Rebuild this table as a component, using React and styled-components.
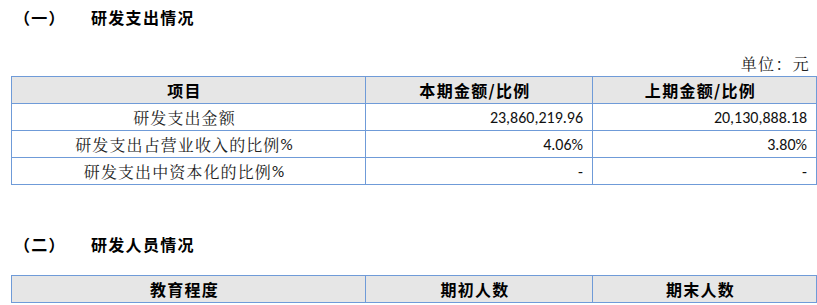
import React from "react";
import styled, { createGlobalStyle } from "styled-components";

const Global = createGlobalStyle`
  html, body { margin: 0; padding: 0; background: #fff; }
  body { font-family: "Noto Sans CJK SC", "Noto Sans", sans-serif; color: #111; }
`;

const CJK_SERIF = `"Noto Serif CJK SC", "Noto Sans CJK SC", serif`;
const CJK_SANS = `"Noto Sans CJK SC", "Noto Sans", sans-serif`;
const NUM = `"Carlito", Lato, "Noto Sans", sans-serif`;

const Page = styled.div`
  width: 817px;
  padding: 8px 0 0 11px;
  box-sizing: border-box;
`;

const Heading = styled.h2`
  display: flex;
  margin: ${(p) => p.$top}px 0 0 0;
  padding-left: 3px;
  font-family: ${CJK_SANS};
  font-weight: 700;
  font-size: 16px;
  line-height: 18px;
  letter-spacing: 1.3px;
  color: #000;
`;

const HeadingNo = styled.span`
  width: 77px;
  flex: none;
`;

const Unit = styled.div`
  margin-top: 29px;
  width: 806px;
  box-sizing: border-box;
  padding-right: 7px;
  text-align: right;
  font-family: ${CJK_SERIF};
  font-weight: 400;
  font-size: 16px;
  line-height: 18px;
  letter-spacing: 1.3px;
  color: #222;
`;

const Table = styled.div`
  display: grid;
  grid-template-columns: 354px 227px 224px;
  width: max-content;
  margin-top: ${(p) => p.$top}px;
  border-top: 1px solid #6f9bd8;
  border-left: 1px solid #6f9bd8;
`;

const Cell = styled.div`
  height: 27px;
  box-sizing: border-box;
  border-right: 1px solid #6f9bd8;
  border-bottom: 1px solid #6f9bd8;
  display: flex;
  align-items: center;
  justify-content: ${(p) => (p.$align === "right" ? "flex-end" : "center")};
  padding: 0 9px 0 ${(p) => (p.$align === "right" ? 0 : 1)}px;
  white-space: nowrap;
`;

const HeadCell = styled(Cell)`
  background: #e6e6e6;
  font-family: ${CJK_SANS};
  font-weight: 700;
  font-size: 16px;
  letter-spacing: 1.3px;
  color: #000;
`;

const LabelCell = styled(Cell)`
  font-family: ${CJK_SERIF};
  font-weight: 400;
  font-size: 16px;
  letter-spacing: 1.1px;
  color: #222;
`;

const Pct = styled.span`
  font-family: ${NUM};
  font-size: 17px;
`;

const NumCell = styled(Cell)`
  font-family: ${NUM};
  font-size: 16px;
  color: #111;
  padding-right: 9px;
`;

const rdRows = [
  ["研发支出金额", "", "23,860,219.96", "20,130,888.18"],
  ["研发支出占营业收入的比例", "%", "4.06%", "3.80%"],
  ["研发支出中资本化的比例", "%", "-", "-"],
];

export default function App() {
  return (
    <Page>
      <Global />
      <Heading $top={0}>
        <HeadingNo>（一）</HeadingNo>
        <span>研发支出情况</span>
      </Heading>
      <Unit>单位：元</Unit>
      <Table $top={3}>
        <HeadCell>项目</HeadCell>
        <HeadCell>本期金额/比例</HeadCell>
        <HeadCell>上期金额/比例</HeadCell>
        {rdRows.map((r) => (
          <React.Fragment key={r[0]}>
            <LabelCell>
              {r[0]}
              {r[1] && <Pct>{r[1]}</Pct>}
            </LabelCell>
            <NumCell $align="right">{r[2]}</NumCell>
            <NumCell $align="right">{r[3]}</NumCell>
          </React.Fragment>
        ))}
      </Table>
      <Heading $top={50}>
        <HeadingNo>（二）</HeadingNo>
        <span>研发人员情况</span>
      </Heading>
      <Table $top={22}>
        <HeadCell>教育程度</HeadCell>
        <HeadCell>期初人数</HeadCell>
        <HeadCell>期末人数</HeadCell>
      </Table>
    </Page>
  );
}
